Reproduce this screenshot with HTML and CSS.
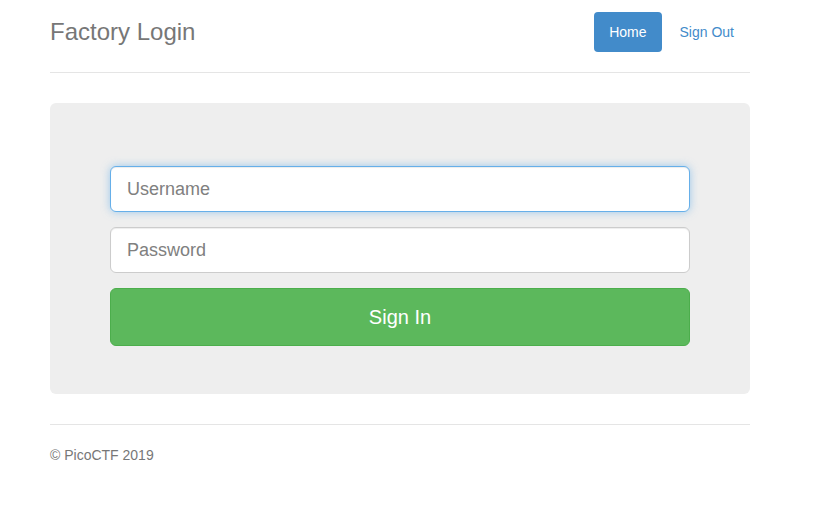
FILE: index.html
```html
<!DOCTYPE html>
<html lang="en">
<head>
  <meta charset="UTF-8" />
  <meta name="viewport" content="width=device-width, initial-scale=1.0"/>
  <title>Factory Login</title>
  <link rel="stylesheet" href="styles.css">
</head>
<body>

  <div class="container">
    <div class="header">
      <h3 class="brand">Factory Login</h3>
      <ul class="nav-pills">
        <li><a href="#" class="active">Home</a></li>
        <li><a href="#">Sign Out</a></li>
      </ul>
    </div>

    <div class="jumbotron">
      <form class="login-form">
        <input type="text" class="form-input focused" name="username" placeholder="Username" autofocus />
        <input type="password" class="form-input" name="password" placeholder="Password" />
        <button type="submit" class="btn-signin">Sign In</button>
      </form>
    </div>

    <footer class="footer">
      <p>&copy; PicoCTF 2019</p>
    </footer>
  </div>

</body>
</html>
```

FILE: styles.css
```css
/* Base */
* {
  box-sizing: border-box;
}

body {
  margin: 0;
  padding-top: 12px;
  font-family: "Liberation Sans", Arial, sans-serif;
  font-size: 14px;
  line-height: 20px;
  color: #333;
  background: #fff;
}

.container {
  width: 700px;
  margin-left: 50px;
}

/* Header */
.header {
  display: flex;
  justify-content: space-between;
  align-items: flex-start;
  padding-bottom: 20px;
  border-bottom: 1px solid #e5e5e5;
}

.brand {
  margin: 0;
  font-size: 24px;
  font-weight: 400;
  line-height: 40px;
  color: #777;
}

.nav-pills {
  display: flex;
  gap: 3px;
  margin: 0 1px 0 0;
  padding: 0;
  list-style: none;
}

.nav-pills a {
  display: block;
  padding: 10px 15px;
  border-radius: 4px;
  color: #428bca;
  text-decoration: none;
}

.nav-pills a.active {
  background-color: #428bca;
  color: #fff;
}

/* Login box */
.jumbotron {
  margin-top: 30px;
  padding: 63px 60px 48px;
  background-color: #eee;
  border-radius: 6px;
}

.login-form {
  display: flex;
  flex-direction: column;
  gap: 15px;
}

.form-input {
  display: block;
  width: 100%;
  height: 46px;
  padding: 10px 16px;
  font-family: inherit;
  font-size: 18px;
  color: #555;
  background: #fff;
  border: 1px solid #ccc;
  border-radius: 6px;
  box-shadow: inset 0 1px 1px rgba(0, 0, 0, 0.075);
  outline: none;
}

.form-input::placeholder {
  color: #808080;
}

.form-input.focused,
.form-input:focus {
  border-color: #66afe9;
  box-shadow: inset 0 1px 1px rgba(0, 0, 0, 0.075), 0 0 8px rgba(102, 175, 233, 0.6);
}

.btn-signin {
  display: block;
  width: 100%;
  padding: 14px 16px;
  font-family: inherit;
  font-size: 20px;
  line-height: 28px;
  color: #fff;
  background-color: #5cb85c;
  border: 1px solid #4cae4c;
  border-radius: 6px;
  cursor: pointer;
}

/* Footer */
.footer {
  margin-top: 30px;
  padding-top: 20px;
  border-top: 1px solid #e5e5e5;
  color: #777;
}

.footer p {
  margin: 0;
}
```
